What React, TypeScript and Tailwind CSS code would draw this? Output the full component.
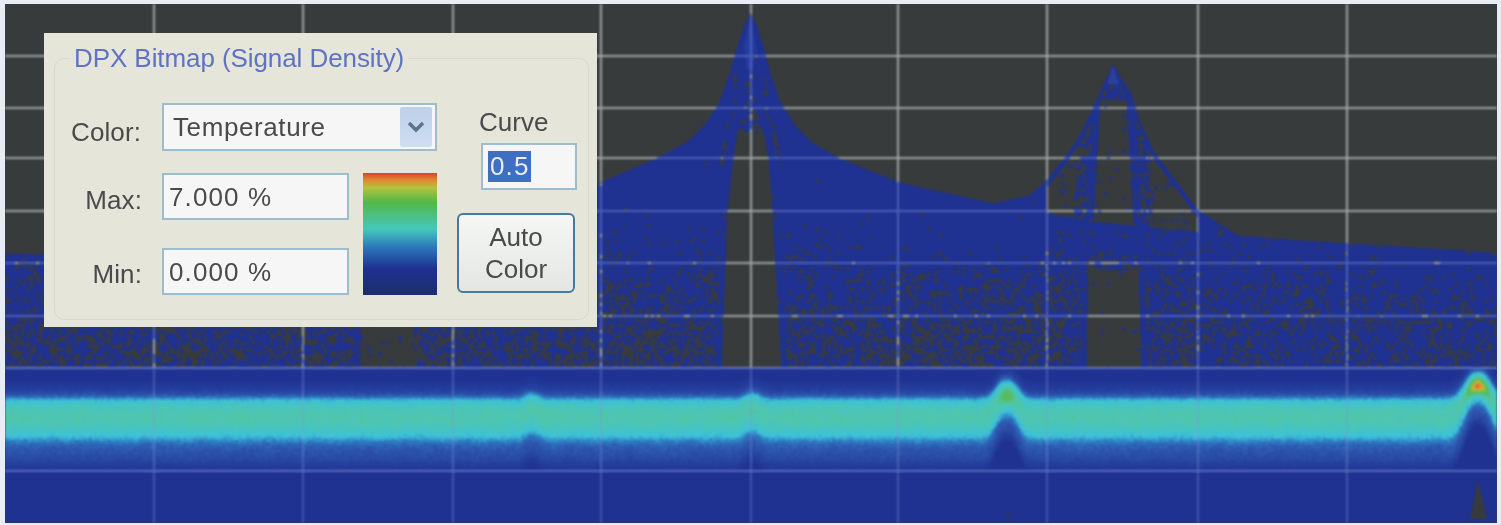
import React from "react";

// seeded noise helpers
function hash(x: number, y: number) {
  const s = Math.sin(x * 127.1 + y * 311.7) * 43758.5453;
  return s - Math.floor(s);
}
function vnoise(x: number, y: number, sc: number) {
  const fx = x / sc, fy = y / sc;
  const ix = Math.floor(fx), iy = Math.floor(fy);
  const tx = fx - ix, ty = fy - iy;
  const a = hash(ix, iy), b = hash(ix + 1, iy), c = hash(ix, iy + 1), d = hash(ix + 1, iy + 1);
  return (a * (1 - tx) + b * tx) * (1 - ty) + (c * (1 - tx) + d * tx) * ty;
}
function lerpPts(pts: number[][], x: number) {
  if (x <= pts[0][0]) return pts[0][1];
  for (let i = 1; i < pts.length; i++) {
    if (x <= pts[i][0]) {
      const [x0, y0] = pts[i - 1], [x1, y1] = pts[i];
      return y0 + ((y1 - y0) * (x - x0)) / (x1 - x0);
    }
  }
  return pts[pts.length - 1][1];
}

const TOP = [
  [5, 254], [44, 254], [300, 225], [600, 182], [658, 157], [689, 140], [706, 122], [718, 104], [728, 76], [737, 46], [745, 22], [750, 13],
  [755, 22], [763, 46], [771, 76], [781, 104], [795, 125], [810, 141], [839, 158], [899, 182], [993, 203], [1029, 195], [1046, 180],
  [1066, 155], [1082, 130], [1093, 106], [1104, 82], [1113, 64], [1122, 80], [1131, 93], [1140, 122], [1154, 152], [1198, 210],
  [1238, 235], [1300, 240], [1496, 252],
];
const BASE = [[993, 203], [1050, 214], [1100, 222], [1200, 232], [1238, 235]];
const H1L = [[110, 745], [125, 738], [158, 733], [211, 727], [368, 721]];
const H1R = [[110, 755], [125, 762], [158, 768], [211, 772], [368, 781]];
const H2L = [[100, 1100], [220, 1093], [265, 1088], [368, 1086]];
const H2R = [[100, 1126], [220, 1133], [265, 1138], [368, 1141]];
const HL = [56, 108, 158, 211, 263, 316];

function speckle(x: number, y: number) {
  let p = lerpPts([[195, 0.004], [225, 0.02], [263, 0.13], [316, 0.34], [366, 0.46]], y);
  if (x > 840 && x < 1040 && y < 263) p *= 0.4;
  if (x > 1198) p *= 0.6;
  if (HL.some((h) => Math.abs(y - h) < 2)) p *= 0.45;
  return p;
}

function isDark(x: number, y: number) {
  const top = lerpPts(TOP, x);
  if (y < top) return true;
  const cx = Math.floor(x / 3), cy = Math.floor(y / 3);
  const r = hash(cx + 3, cy + 7);
  const n = 0.4 + 1.2 * vnoise(x, y, 13);
  // peak 1
  const l1 = lerpPts(H1L, y), r1 = lerpPts(H1R, y);
  if (y >= 110 && x >= l1 && x <= r1) {
    if (y > 132) return true;
    return r < 0.45;
  }
  if (y < 110 && y > 50 && x > 743 && x < 757) return r < 0.15;
  if (y < 165 && y > 70) {
    // slim gaps between the traces on each shoulder
    if ((x > l1 - 13 && x < l1 - 8) || (x > r1 + 8 && x < r1 + 13)) return r < 0.4;
    if (x > l1 - 8 && x < r1 + 8) return false;
  }
  if (y >= 165 && x > l1 - 6 && x < r1 + 6) return r < 0.02;
  // hidden hole behind the panel
  if (y > 250 && x > 360 && x < 414) return r < 0.97;
  // peak 2
  if (x > 1046 && x < 1198) {
    const base = lerpPts(BASE, x);
    const l2 = lerpPts(H2L, y), r2 = lerpPts(H2R, y);
    if (y < base) {
      if (y < top + 8) return false;
      if (y >= 100 && x >= l2 && x <= r2) return r < 0.97;
      if (y >= 100 && (x > l2 - 8 && x < r2 + 8)) return r < 0.08;
      if (y >= 100 && (x > l2 - 20 && x < r2 + 20)) return r < 0.45;
      if (y >= 100) return r < 0.92;
      return r < 0.2;
    }
    if (x >= l2 && x <= r2) {
      if (y > 270) return r < 0.98;
      if (y > 245) return r < ((y - 245) / 25) * 0.7;
      return r < 0.02;
    }
    if (y > 250 && x > l2 - 6 && x < r2 + 6) return r < 0.04;
  }
  return r < speckle(x, y) * n;
}

const STOPS: [number, number[]][] = [
  [0, [31, 49, 145]], [0.12, [36, 62, 156]], [0.22, [44, 84, 172]], [0.32, [46, 122, 194]], [0.42, [60, 194, 218]],
  [0.55, [80, 198, 170]], [0.68, [84, 186, 80]], [0.8, [176, 192, 64]], [0.9, [236, 150, 48]], [1, [218, 64, 48]],
];
function colorOf(t: number) {
  t = Math.max(0, Math.min(1, t));
  for (let i = 1; i < STOPS.length; i++) {
    if (t <= STOPS[i][0]) {
      const [a, ca] = STOPS[i - 1], [b, cb] = STOPS[i];
      const f = (t - a) / (b - a);
      return `rgb(${ca.map((c, k) => Math.round(c + (cb[k] - c) * f)).join(",")})`;
    }
  }
  return "rgb(218,64,48)";
}

const PEAKS = [
  { x: 531, a: 5, w: 9, b: 0 },
  { x: 751, a: 6, w: 10, b: 0.02 },
  { x: 1006, a: 21, w: 14, b: 0.16 },
  { x: 1477, a: 31, w: 17, b: 0.42 },
];
const UP = [[0, 0.54], [7, 0.52], [13, 0.47], [17, 0.41], [20, 0.29], [24, 0.17], [30, 0.09], [38, 0]];
const DOWN = [[0, 0.54], [7, 0.52], [14, 0.47], [20, 0.41], [24, 0.33], [29, 0.25], [42, 0.17], [50, 0.09], [56, 0]];

function density(x: number, y: number) {
  let shift = 0, boost = 0, narrow = 0;
  for (const p of PEAKS) {
    const g = Math.exp(-Math.pow(Math.abs(x - p.x) / p.w, 2.6));
    shift += p.a * g;
    boost += p.b * Math.exp(-(((x - p.x) / (p.w * 0.5)) ** 2));
    narrow += (p.a / 31) * 0.25 * g;
  }
  const dy = (y - (416 - shift)) / (1 - narrow);
  const t = lerpPts(dy < 0 ? UP : DOWN, Math.abs(dy));
  const centre = Math.exp(-((dy / 9) ** 2));
  const wob = (vnoise(x, y, 9) - 0.5) * 0.025 * Math.min(1, t * 5);
  const n = (hash(x * 1.3, y * 0.7) - 0.5) * 0.055 * Math.min(1, t * 5);
  return t + boost * centre + n + wob;
}

function buildPaths() {
  const parts: string[] = [];
  for (let y = 4; y < 368; y += 1) {
    let start = -1;
    for (let x = 5; x <= 1497; x += 1) {
      const on = x < 1497 && !isDark(x, y);
      if (on && start < 0) start = x;
      if (!on && start >= 0) {
        parts.push(`M${start} ${y}h${x - start}v1h${start - x}z`);
        start = -1;
      }
    }
  }
  const levels = new Map<string, string[]>();
  for (let y = 368; y < 523; y += 2) {
    for (let x = 5; x < 1497; x += 2) {
      const t = Math.round(density(x, y) * 48) / 48;
      if (t <= 0) continue;
      const c = colorOf(t);
      if (!levels.has(c)) levels.set(c, []);
      levels.get(c)!.push(`M${x} ${y}h2.2v2.2h-2.2z`);
    }
  }
  return {
    blue: parts.join(""),
    levels: Array.from(levels.entries()).map(([c, d]) => [c, d.join("")] as [string, string]),
  };
}

const VX = [154, 303, 453, 601, 751, 898, 1047, 1198, 1347];
const HY = [56, 108, 158, 211, 263, 316, 368, 471];

function Spectrum() {
  const { blue, levels } = React.useMemo(buildPaths, []);
  return (
    <svg viewBox="5 4 1492 519" width="1492" height="519" className="block">
      <defs>
        <clipPath id="blueArea">
          <path d={blue} />
        </clipPath>
        <filter id="soft" x="0" y="0" width="100%" height="100%" colorInterpolationFilters="sRGB">
          <feGaussianBlur stdDeviation="0.8" />
        </filter>
      </defs>
      <g filter="url(#soft)">
        <rect x="0" y="0" width="1501" height="525" fill="#383b3b" />
        {VX.map((x) => (
          <rect key={x} x={x - 1} y="4" width="2" height="364" fill="#9ea6a3" />
        ))}
        {HY.slice(0, 7).map((y) => (
          <rect key={y} x="5" y={y - 1} width="1492" height="2" fill="#9ea6a3" />
        ))}
        <path d={blue} fill="#1f3191" />
        <path d="M750 18L756 46L753 70L747 70L744 46Z" fill="#2f4cb6" opacity="0.45" />
        <path d="M1113 66L1119 84L1107 84Z" fill="#2f4cb6" opacity="0.55" />
        <g clipPath="url(#blueArea)">
          {VX.map((x) => (
            <rect key={x} x={x - 1} y="4" width="2" height="364" fill="#4a60b6" />
          ))}
          {HY.slice(0, 7).map((y) => (
            <rect key={y} x="5" y={y - 1} width="1492" height="2" fill="#4a60b6" />
          ))}
        </g>
        <rect x="5" y="368" width="1492" height="155" fill="#1f3191" />
        {levels.map(([c, d]) => (
          <path key={c} d={d} fill={c} shapeRendering="crispEdges" />
        ))}
        {VX.map((x) => (
          <rect key={x} x={x - 1} y="368" width="2" height="155" fill="#8296da" opacity="0.36" />
        ))}
        {[368, 471].map((y) => (
          <rect key={y} x="5" y={y - 1} width="1492" height="2" fill="#6479c8" opacity="0.8" />
        ))}
        <path d="M1478 480L1487 519H1470Z" fill="#383b3b" />
        <path d="M1005 514L1011 514L1008 520Z" fill="#383b3b" opacity="0.7" />
      </g>
    </svg>
  );
}

function Field({ children, className }: { children: React.ReactNode; className: string }) {
  return (
    <div className={`flex items-center border-2 border-[#9dbccd] bg-[#f5f6f5] ${className}`}>{children}</div>
  );
}

const font = "font-['Liberation_Sans',sans-serif]";

export default function App() {
  return (
    <div className="relative h-[525px] w-[1501px] overflow-hidden bg-[#e8edf5] pb-[2px] pl-[5px] pr-[4px] pt-[4px]">
      <Spectrum />
      <div
        className={`absolute left-[44px] top-[33px] h-[294px] w-[553px] bg-[#e5e5da] pb-[7px] pl-[10px] pr-[8px] pt-[10px] text-[26px] leading-[30px] text-[#4a4a4c] blur-[0.5px] ${font}`}
      >
        <fieldset className="h-full rounded-[10px] border border-[#d8dacf]">
          <legend className="ml-[15px] px-[4px] text-[26px] leading-[30px] tracking-[-0.08px] text-[#5f72c4]">
            DPX Bitmap (Signal Density)
          </legend>
          <div className="flex pl-[7px] pt-[30px]">
            <div className="grid grid-cols-[100px_187px_14px_74px] grid-rows-[70px_75px_47px] items-start">
              <div className="pr-[21px] pt-[14px] text-right tracking-[0.1px]">Color:</div>
              <Field className="col-span-3 h-[48px] justify-between pl-[9px] pr-[3px]">
                <span className="tracking-[0.6px]">Temperature</span>
                <span className="flex h-[40px] w-[32px] items-center justify-center rounded-[2px] bg-gradient-to-b from-[#bcd0ea] to-[#d0def0]">
                  <svg width="18" height="12" viewBox="0 0 18 12" fill="none">
                    <path d="M2 2L9 9L16 2" stroke="#5b7488" strokeWidth="3.4" />
                  </svg>
                </span>
              </Field>
              <div className="pr-[20px] pt-[12px] text-right tracking-[0.1px]">Max:</div>
              <Field className="h-[47px] pl-[5px]">
                <span className="tracking-[1.1px]">7.000 %</span>
              </Field>
              <div />
              <div className="row-span-2 h-[122px] bg-[linear-gradient(to_bottom,#d8402f_0%,#e4812f_5%,#b4c23e_12%,#52b848_24%,#44c8bc_46%,#2b72b8_62%,#1e3192_78%,#1c2e6c_100%)]" />
              <div className="pr-[20px] pt-[11px] text-right tracking-[0.1px]">Min:</div>
              <Field className="h-[47px] pl-[5px]">
                <span className="tracking-[1.1px]">0.000 %</span>
              </Field>
            </div>
            <div className="ml-[20px] flex w-[120px] flex-col">
              <div className="mt-[4px] h-[30px] pl-[22px]">Curve</div>
              <Field className="ml-[24px] mt-[6px] h-[47px] w-[96px] pl-[5px]">
                <span className="bg-[#3f6fc4] px-[2px] leading-[31px] tracking-[1.1px] text-[#e8eef8]">0.5</span>
              </Field>
              <div className="mt-[23px] flex h-[80px] w-[118px] flex-col items-center justify-center rounded-[6px] border-2 border-[#457a9e] bg-gradient-to-b from-[#f6f7f5] to-[#e3e6e2] leading-[32px]">
                <span>Auto</span>
                <span>Color</span>
              </div>
            </div>
          </div>
        </fieldset>
      </div>
    </div>
  );
}
